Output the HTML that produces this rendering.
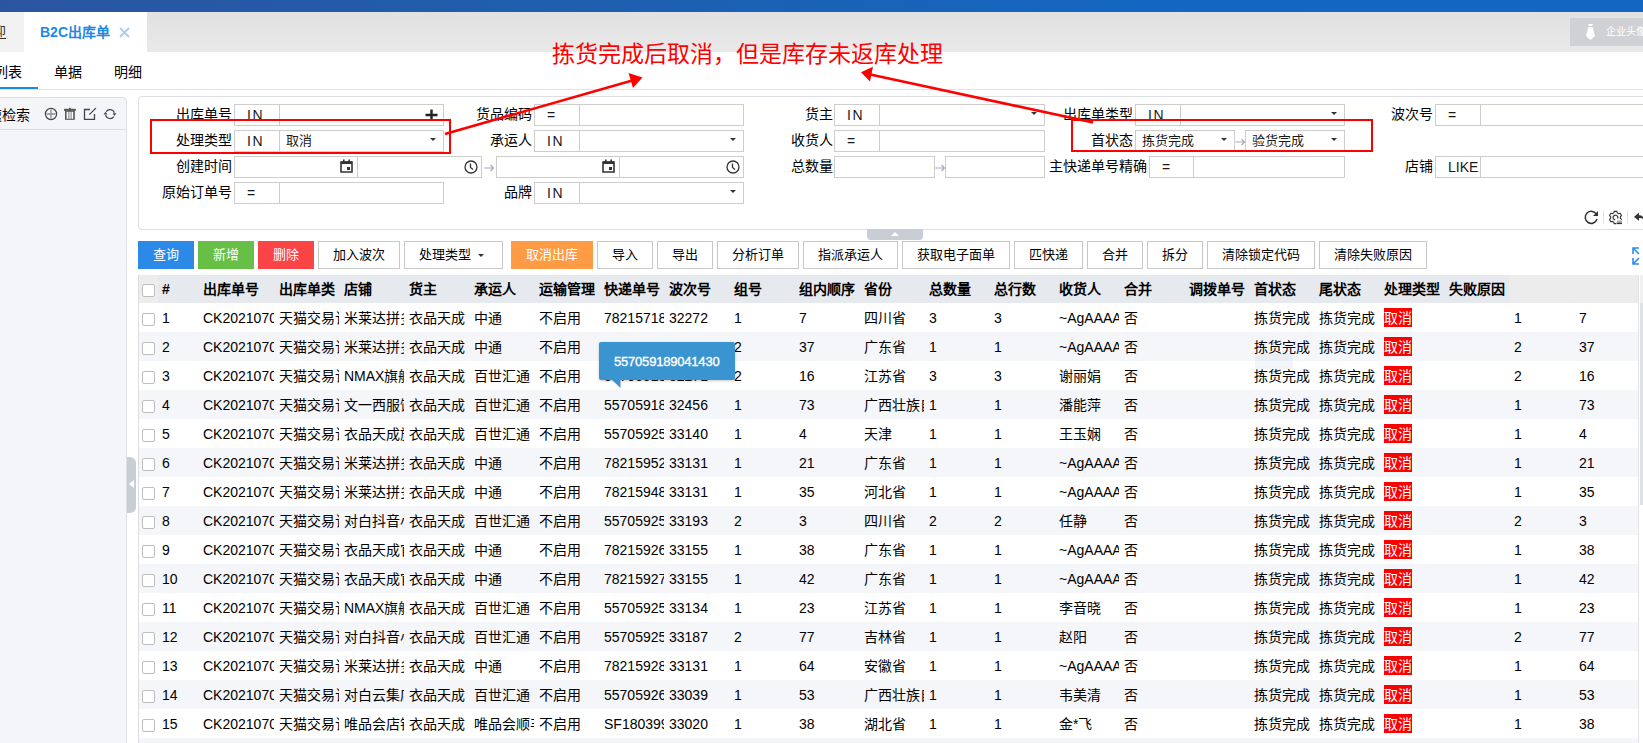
<!DOCTYPE html><html lang="zh-CN"><head><meta charset="utf-8"><style>
*{box-sizing:border-box;margin:0;padding:0}
html,body{width:1643px;height:743px;overflow:hidden;background:#fff}
body{position:relative;font-family:"Liberation Sans",sans-serif;color:#000;font-size:14px}
.abs{position:absolute}
.topbar{left:0;top:0;width:1643px;height:12px;background:linear-gradient(90deg,#2b55a1 0%,#225cab 25%,#1a62b6 50%,#1367c2 73%,#1466c2 100%)}
.tabbar{left:0;top:12px;width:1643px;height:40px;background:linear-gradient(180deg,#e1e1e1,#e9e9e9)}
.tab0{left:0;top:12px;width:24px;height:40px;background:#f2f2f2;overflow:hidden}
.tab1{left:24px;top:12px;width:123px;height:40px;background:#fff}
.lbl{position:absolute;text-align:right;white-space:nowrap;font-size:14px;line-height:22px;color:#000}
.inp{position:absolute;height:22px;border:1px solid #cdcdcd;background:#fff;white-space:nowrap}
.op{position:absolute;left:0;top:0;height:20px;border-right:1px solid #cdcdcd;text-align:left;padding-left:12px;line-height:20px;font-size:14px;color:#1a1a1a}
.val{position:absolute;left:6px;top:0;line-height:20px;font-size:13px;color:#1a1a1a}
.caret{position:absolute;top:7px;width:0;height:0;border-left:3px solid transparent;border-right:3px solid transparent;border-top:3.5px solid #333}
.arr{position:absolute;width:11px;height:8px}
.btn{position:absolute;top:241px;height:28px;border:1px solid #c8c8c8;background:#fff;font-size:13px;line-height:26px;text-align:center;color:#000;white-space:nowrap}
.btn.c{border:none;color:#fff;line-height:28px}
.th,.td{position:absolute;white-space:nowrap;overflow:hidden;padding-left:4px}
.th{font-weight:bold;font-size:14px;line-height:28px;top:0;height:28px}
.row{position:absolute;left:139px;width:1499px;height:29px}
.td{font-size:14px;line-height:29px;top:1px;height:28px;color:#000}
.cb{position:absolute;width:13px;height:13px;border:1px solid #bdbdbd;border-radius:2px;background:#fff}
.qx{background:#f00;color:#fff;display:inline-block;line-height:20px;height:19px;vertical-align:middle;position:relative;top:-2px}
</style></head><body>
<div class="abs topbar"></div>
<div class="abs tabbar"></div>
<div class="abs tab0"><span class="abs" style="left:-22px;top:10px;font-size:14px;line-height:20px;color:#333;text-decoration:underline">欢迎</span></div>
<div class="abs tab1"><span class="abs" style="left:16px;top:10px;font-size:14px;line-height:20px;font-weight:bold;color:#1e88e5">B2C出库单</span><svg class="abs" style="left:95px;top:15px" width="11" height="11" viewBox="0 0 11 11"><path d="M1 1l9 9M10 1l-9 9" stroke="#a6cdf5" stroke-width="1.8"/></svg></div>
<div class="abs" style="left:1570px;top:18px;width:80px;height:28px;background:#d0d1d5"><svg class="abs" style="left:15px;top:6px" width="12" height="16" viewBox="0 0 12 16"><path d="M3 0h5l-1 2h-3z M3.5 3h4l2.5 9-4.5 4-4.5-4z" fill="#fff"/></svg><span class="abs" style="left:36px;top:7px;font-size:10px;line-height:14px;color:#fff">企业头像</span></div>
<span class="abs" style="left:-6px;top:62px;font-size:14px;line-height:20px;color:#000">列表</span>
<span class="abs" style="left:54px;top:62px;font-size:14px;line-height:20px;color:#000">单据</span>
<span class="abs" style="left:114px;top:62px;font-size:14px;line-height:20px;color:#000">明细</span>
<div class="abs" style="left:0;top:87px;width:38px;height:2px;background:#1e88e5"></div>
<div class="abs" style="left:0;top:89px;width:1643px;height:1px;background:#e2e2e2"></div>
<div class="abs" style="left:-10px;top:97px;width:137px;height:700px;background:#f4f5f8;border:1px solid #dcdee3;border-radius:4px"></div>
<div class="abs" style="left:0;top:129px;width:126px;height:1px;background:#dcdee3"></div>
<span class="abs" style="left:-12px;top:105px;font-size:14px;line-height:20px;color:#000">速检索</span>
<svg class="abs" style="left:44px;top:107px" width="74" height="14" viewBox="0 0 74 14">
<circle cx="7" cy="7" r="5.6" fill="none" stroke="#444" stroke-width="1.2"/><path d="M7 2.5v9M2.5 7h9" stroke="#8a8a8a" stroke-width="1.3"/>
<rect x="20" y="1.8" width="11.8" height="2.1" fill="#555"/><rect x="25" y="0.8" width="1.8" height="1.5" fill="#555"/><rect x="21" y="3.8" width="9.8" height="9" fill="#555"/><rect x="22.6" y="4.8" width="1.6" height="7" fill="#fff"/><rect x="27.6" y="4.8" width="1.6" height="7" fill="#fff"/><rect x="24.4" y="4.8" width="3" height="7" fill="#ccc"/>
<path d="M46 2.5H40.5V12.3H50.5V7" fill="none" stroke="#444" stroke-width="1.3"/><path d="M45.3 7.6L51.9 1.1" stroke="#444" stroke-width="1.3"/>
<path d="M62.2 4.6A4.6 4.6 0 0 1 70.4 5.8" fill="none" stroke="#444" stroke-width="1.2"/><path d="M68.6 6.2h3.8l-1.9 2.8z" fill="#444"/>
<path d="M69.8 9.6A4.6 4.6 0 0 1 61.6 8.2" fill="none" stroke="#444" stroke-width="1.2"/><path d="M59.6 7.6h3.8l-1.9-2.8z" fill="#444"/>
</svg>
<div class="abs" style="left:127px;top:457px;width:9px;height:56px;background:#c9cdd6;border-radius:0 6px 6px 0"></div>
<div class="abs" style="left:129px;top:480px;width:0;height:0;border-top:4px solid transparent;border-bottom:4px solid transparent;border-right:5px solid #fff"></div>
<div class="abs" style="left:138px;top:96px;width:1530px;height:134px;border:1px solid #dcdee3;border-radius:4px;background:#fff"></div>
<span class="lbl" style="right:1411px;top:103px">出库单号</span>
<div class="inp" style="left:234px;top:104px;width:210px"><span class="op" style="width:45px;letter-spacing:1.5px">IN</span><svg class="abs" style="left:190px;top:4px" width="13" height="12" viewBox="0 0 13 12"><path d="M6.5 0.5v11M0.5 6h12" stroke="#222" stroke-width="2.4"/></svg></div>
<span class="lbl" style="right:1411px;top:129px">处理类型</span>
<div class="inp" style="left:234px;top:130px;width:210px"><span class="op" style="width:45px;letter-spacing:1.5px">IN</span><span class="val" style="left:51px">取消</span><span class="caret" style="left:195px"></span></div>
<span class="lbl" style="right:1411px;top:155px">创建时间</span>
<span class="lbl" style="right:1411px;top:181px">原始订单号</span>
<div class="inp" style="left:234px;top:182px;width:210px"><span class="op" style="width:45px">=</span></div>
<span class="lbl" style="right:1111px;top:103px">货品编码</span>
<div class="inp" style="left:534px;top:104px;width:210px"><span class="op" style="width:45px">=</span></div>
<span class="lbl" style="right:1111px;top:129px">承运人</span>
<div class="inp" style="left:534px;top:130px;width:210px"><span class="op" style="width:45px;letter-spacing:1.5px">IN</span><span class="caret" style="left:195px"></span></div>
<span class="lbl" style="right:1111px;top:181px">品牌</span>
<div class="inp" style="left:534px;top:182px;width:210px"><span class="op" style="width:45px;letter-spacing:1.5px">IN</span><span class="caret" style="left:195px"></span></div>
<div class="inp" style="left:234px;top:156px;width:248px"><div class="abs" style="left:122px;top:0;width:1px;height:20px;background:#cdcdcd"></div><svg class="abs" style="left:105px;top:2px" width="13" height="14" viewBox="0 0 13 14"><path d="M1 3h11v10h-11z" fill="none" stroke="#333" stroke-width="1.6"/><path d="M1 2.5h11v2.5h-11z" fill="#333"/><rect x="3" y="0.5" width="1.6" height="3" fill="#333"/><rect x="8.4" y="0.5" width="1.6" height="3" fill="#333"/><rect x="7" y="8" width="3" height="3" fill="#333"/></svg><svg class="abs" style="left:229px;top:3px" width="14" height="14" viewBox="0 0 14 14"><circle cx="7" cy="7" r="6" fill="none" stroke="#333" stroke-width="1.3"/><path d="M6.5 3.5v4l2.5 2" fill="none" stroke="#333" stroke-width="1.3"/></svg></div>
<div class="inp" style="left:496px;top:156px;width:248px"><div class="abs" style="left:122px;top:0;width:1px;height:20px;background:#cdcdcd"></div><svg class="abs" style="left:105px;top:2px" width="13" height="14" viewBox="0 0 13 14"><path d="M1 3h11v10h-11z" fill="none" stroke="#333" stroke-width="1.6"/><path d="M1 2.5h11v2.5h-11z" fill="#333"/><rect x="3" y="0.5" width="1.6" height="3" fill="#333"/><rect x="8.4" y="0.5" width="1.6" height="3" fill="#333"/><rect x="7" y="8" width="3" height="3" fill="#333"/></svg><svg class="abs" style="left:229px;top:3px" width="14" height="14" viewBox="0 0 14 14"><circle cx="7" cy="7" r="6" fill="none" stroke="#333" stroke-width="1.3"/><path d="M6.5 3.5v4l2.5 2" fill="none" stroke="#333" stroke-width="1.3"/></svg></div>
<svg class="arr" style="left:484px;top:164px" width="11" height="8" viewBox="0 0 11 8"><path d="M0.5 4h9M6.5 1l3 3-3 3" fill="none" stroke="#a3abba" stroke-width="1.2"/></svg>
<span class="lbl" style="right:810px;top:103px">货主</span>
<div class="inp" style="left:834px;top:104px;width:211px"><span class="op" style="width:45px;letter-spacing:1.5px">IN</span><span class="caret" style="left:196px"></span></div>
<span class="lbl" style="right:810px;top:129px">收货人</span>
<div class="inp" style="left:834px;top:130px;width:211px"><span class="op" style="width:45px">=</span></div>
<span class="lbl" style="right:810px;top:155px">总数量</span>
<div class="inp" style="left:834px;top:156px;width:101px"></div>
<svg class="arr" style="left:935px;top:164px" width="11" height="8" viewBox="0 0 11 8"><path d="M0.5 4h9M6.5 1l3 3-3 3" fill="none" stroke="#a3abba" stroke-width="1.2"/></svg>
<div class="inp" style="left:945px;top:156px;width:100px"></div>
<span class="lbl" style="right:510px;top:103px">出库单类型</span>
<div class="inp" style="left:1135px;top:104px;width:210px"><span class="op" style="width:45px;letter-spacing:1.5px">IN</span><span class="caret" style="left:195px"></span></div>
<span class="lbl" style="right:510px;top:129px">首状态</span>
<div class="inp" style="left:1135px;top:130px;width:100px"><span class="val" style="left:6px">拣货完成</span><span class="caret" style="left:85px"></span></div>
<svg class="arr" style="left:1235px;top:138px" width="11" height="8" viewBox="0 0 11 8"><path d="M0.5 4h9M6.5 1l3 3-3 3" fill="none" stroke="#a3abba" stroke-width="1.2"/></svg>
<div class="inp" style="left:1245px;top:130px;width:100px"><span class="val" style="left:6px">验货完成</span><span class="caret" style="left:85px"></span></div>
<span class="lbl" style="right:496px;top:155px">主快递单号精确</span>
<div class="inp" style="left:1149px;top:156px;width:196px"><span class="op" style="width:44px">=</span></div>
<span class="lbl" style="right:210px;top:103px">波次号</span>
<div class="inp" style="left:1435px;top:104px;width:260px"><span class="op" style="width:45px">=</span></div>
<span class="lbl" style="right:210px;top:155px">店铺</span>
<div class="inp" style="left:1435px;top:156px;width:260px"><span class="op" style="width:45px">LIKE</span></div>
<svg class="abs" style="left:1584px;top:210px" width="59" height="15" viewBox="0 0 59 15">
<path d="M12.5 4.5A6 6 0 1 0 13 9" fill="none" stroke="#333" stroke-width="1.5"/><path d="M14 1v5h-5z" fill="#333"/>
<rect x="19" y="1" width="1" height="13" fill="#dcdfe5"/>
<g transform="translate(25,1)"><path d="M4.66 1.96 L5.19 0.34 L7.81 0.34 L8.34 1.96 L9.52 2.64 L11.18 2.28 L12.49 4.55 L11.35 5.82 L11.35 7.18 L12.49 8.45 L11.18 10.72 L9.52 10.36 L8.34 11.04 L7.81 12.66 L5.19 12.66 L4.66 11.04 L3.48 10.36 L1.82 10.72 L0.51 8.45 L1.65 7.18 L1.65 5.82 L0.51 4.55 L1.82 2.28 L3.48 2.64Z" fill="none" stroke="#333" stroke-width="1.1"/><path d="M8.6 7.6A2.4 2.4 0 1 0 6.2 8.9" fill="none" stroke="#333" stroke-width="1.2"/><rect x="7.5" y="8.8" width="6.5" height="5" fill="#fff"/><rect x="8" y="9.5" width="5" height="2" fill="#aaa"/><rect x="8" y="11.6" width="5" height="1.5" fill="#333"/></g>
<rect x="43" y="1" width="1" height="13" fill="#dcdfe5"/>
<path d="M50 7l5-4.5v2.8c3 0 5 1.5 5 5-1-1.8-2.5-2.3-5-2.3v2.8z" fill="#333"/>
</svg>
<div class="abs" style="left:867px;top:229px;width:56px;height:11px;background:#c9cdd6;border-radius:0 0 4px 4px"></div>
<div class="abs" style="left:890.5px;top:231.5px;width:0;height:0;border-left:4px solid transparent;border-right:4px solid transparent;border-bottom:4.5px solid #fff"></div>
<div class="btn c" style="left:138px;width:56px;background:#2b89e8">查询</div>
<div class="btn c" style="left:198px;width:56px;background:#67bf45">新增</div>
<div class="btn c" style="left:258px;width:56px;background:#fb4445">删除</div>
<div class="btn" style="left:318px;width:82px">加入波次</div>
<div class="btn" style="left:404px;width:99px"><span class="abs" style="left:14px;top:0">处理类型</span><span class="caret" style="left:73px;top:12px;border-left-width:3px;border-right-width:3px;border-top-width:3px"></span></div>
<div class="btn c" style="left:511px;width:82px;background:#ff9b45">取消出库</div>
<div class="btn" style="left:597px;width:56px">导入</div>
<div class="btn" style="left:657px;width:56px">导出</div>
<div class="btn" style="left:717px;width:82px">分析订单</div>
<div class="btn" style="left:803px;width:95px">指派承运人</div>
<div class="btn" style="left:902px;width:108px">获取电子面单</div>
<div class="btn" style="left:1014px;width:69px">匹快递</div>
<div class="btn" style="left:1087px;width:56px">合并</div>
<div class="btn" style="left:1147px;width:56px">拆分</div>
<div class="btn" style="left:1207px;width:108px">清除锁定代码</div>
<div class="btn" style="left:1319px;width:108px">清除失败原因</div>
<svg class="abs" style="left:1631px;top:246px" width="10" height="20" viewBox="0 0 10 20"><g fill="none" stroke="#2d8cf0" stroke-width="1.6"><path d="M2 8V2h6M2 2l6 6"/><path d="M2 12v6h6M2 18l6-6"/></g></svg>
<div class="abs" style="left:138px;top:275px;width:1px;height:470px;background:#dddddd"></div>
<div class="abs" style="left:139px;top:275px;width:1370px;height:28px;background:#e6e9ee"></div>
<div class="abs" style="left:139px;top:275px;width:19px;height:28px;background:#ededed"></div>
<div class="abs" style="left:1509px;top:275px;width:130px;height:28px;background:#ececec"></div>
<div class="abs" style="left:1638px;top:275px;width:1px;height:470px;background:#e3e3e3"></div>
<div class="abs" style="left:1640px;top:275px;width:3px;height:28px;background:#f0f0f0"></div>
<div class="abs" style="left:1640px;top:303px;width:3px;height:202px;background:#dde1e8"></div>
<div class="abs cb" style="left:142px;top:284px"></div>
<div class="abs" style="left:0;top:275px;width:1643px;height:28px">
<span class="th" style="left:158px;width:36px">#</span>
<span class="th" style="left:199px;width:71px">出库单号</span>
<span class="th" style="left:275px;width:60px">出库单类型</span>
<span class="th" style="left:340px;width:60px">店铺</span>
<span class="th" style="left:405px;width:60px">货主</span>
<span class="th" style="left:470px;width:60px">承运人</span>
<span class="th" style="left:535px;width:60px">运输管理</span>
<span class="th" style="left:600px;width:60px">快递单号</span>
<span class="th" style="left:665px;width:60px">波次号</span>
<span class="th" style="left:730px;width:60px">组号</span>
<span class="th" style="left:795px;width:60px">组内顺序</span>
<span class="th" style="left:860px;width:60px">省份</span>
<span class="th" style="left:925px;width:60px">总数量</span>
<span class="th" style="left:990px;width:60px">总行数</span>
<span class="th" style="left:1055px;width:60px">收货人</span>
<span class="th" style="left:1120px;width:60px">合并</span>
<span class="th" style="left:1185px;width:60px">调拨单号</span>
<span class="th" style="left:1250px;width:60px">首状态</span>
<span class="th" style="left:1315px;width:60px">尾状态</span>
<span class="th" style="left:1380px;width:60px">处理类型</span>
<span class="th" style="left:1445px;width:60px">失败原因</span>
</div>
<div class="abs" style="left:139px;top:303px;width:1499px;height:29px;background:#fff"></div>
<div class="abs cb" style="left:142px;top:313px"></div>
<div class="abs" style="left:0;top:303px;width:1643px;height:29px">
<span class="td" style="left:158px;width:40px">1</span>
<span class="td" style="left:199px;width:75px">CK2021070812345</span>
<span class="td" style="left:275px;width:64px">天猫交易订单</span>
<span class="td" style="left:340px;width:64px">米莱达拼多多</span>
<span class="td" style="left:405px;width:64px">衣品天成</span>
<span class="td" style="left:470px;width:64px">中通</span>
<span class="td" style="left:535px;width:64px">不启用</span>
<span class="td" style="left:600px;width:64px">7821571812345</span>
<span class="td" style="left:665px;width:64px">32272</span>
<span class="td" style="left:730px;width:64px">1</span>
<span class="td" style="left:795px;width:64px">7</span>
<span class="td" style="left:860px;width:64px">四川省</span>
<span class="td" style="left:925px;width:64px">3</span>
<span class="td" style="left:990px;width:64px">3</span>
<span class="td" style="left:1055px;width:64px">~AgAAAA</span>
<span class="td" style="left:1120px;width:64px">否</span>
<span class="td" style="left:1250px;width:64px">拣货完成</span>
<span class="td" style="left:1315px;width:64px">拣货完成</span>
<span class="td" style="left:1380px;width:64px"><span class="qx">取消</span></span>
<span class="td" style="left:1510px;width:64px">1</span>
<span class="td" style="left:1575px;width:64px">7</span>
</div>
<div class="abs" style="left:139px;top:332px;width:1499px;height:29px;background:#f5f6f9"></div>
<div class="abs cb" style="left:142px;top:342px"></div>
<div class="abs" style="left:0;top:332px;width:1643px;height:29px">
<span class="td" style="left:158px;width:40px">2</span>
<span class="td" style="left:199px;width:75px">CK2021070812345</span>
<span class="td" style="left:275px;width:64px">天猫交易订单</span>
<span class="td" style="left:340px;width:64px">米莱达拼多多</span>
<span class="td" style="left:405px;width:64px">衣品天成</span>
<span class="td" style="left:470px;width:64px">中通</span>
<span class="td" style="left:535px;width:64px">不启用</span>
<span class="td" style="left:600px;width:64px">7821571812345</span>
<span class="td" style="left:665px;width:64px">33071</span>
<span class="td" style="left:730px;width:64px">2</span>
<span class="td" style="left:795px;width:64px">37</span>
<span class="td" style="left:860px;width:64px">广东省</span>
<span class="td" style="left:925px;width:64px">1</span>
<span class="td" style="left:990px;width:64px">1</span>
<span class="td" style="left:1055px;width:64px">~AgAAAA</span>
<span class="td" style="left:1120px;width:64px">否</span>
<span class="td" style="left:1250px;width:64px">拣货完成</span>
<span class="td" style="left:1315px;width:64px">拣货完成</span>
<span class="td" style="left:1380px;width:64px"><span class="qx">取消</span></span>
<span class="td" style="left:1510px;width:64px">2</span>
<span class="td" style="left:1575px;width:64px">37</span>
</div>
<div class="abs" style="left:139px;top:361px;width:1499px;height:29px;background:#fff"></div>
<div class="abs cb" style="left:142px;top:371px"></div>
<div class="abs" style="left:0;top:361px;width:1643px;height:29px">
<span class="td" style="left:158px;width:40px">3</span>
<span class="td" style="left:199px;width:75px">CK2021070812345</span>
<span class="td" style="left:275px;width:64px">天猫交易订单</span>
<span class="td" style="left:340px;width:64px">NMAX旗舰店</span>
<span class="td" style="left:405px;width:64px">衣品天成</span>
<span class="td" style="left:470px;width:64px">百世汇通</span>
<span class="td" style="left:535px;width:64px">不启用</span>
<span class="td" style="left:600px;width:64px">557059189041430</span>
<span class="td" style="left:665px;width:64px">32271</span>
<span class="td" style="left:730px;width:64px">2</span>
<span class="td" style="left:795px;width:64px">16</span>
<span class="td" style="left:860px;width:64px">江苏省</span>
<span class="td" style="left:925px;width:64px">3</span>
<span class="td" style="left:990px;width:64px">3</span>
<span class="td" style="left:1055px;width:64px">谢丽娟</span>
<span class="td" style="left:1120px;width:64px">否</span>
<span class="td" style="left:1250px;width:64px">拣货完成</span>
<span class="td" style="left:1315px;width:64px">拣货完成</span>
<span class="td" style="left:1380px;width:64px"><span class="qx">取消</span></span>
<span class="td" style="left:1510px;width:64px">2</span>
<span class="td" style="left:1575px;width:64px">16</span>
</div>
<div class="abs" style="left:139px;top:390px;width:1499px;height:29px;background:#f5f6f9"></div>
<div class="abs cb" style="left:142px;top:400px"></div>
<div class="abs" style="left:0;top:390px;width:1643px;height:29px">
<span class="td" style="left:158px;width:40px">4</span>
<span class="td" style="left:199px;width:75px">CK2021070812345</span>
<span class="td" style="left:275px;width:64px">天猫交易订单</span>
<span class="td" style="left:340px;width:64px">文一西服饰</span>
<span class="td" style="left:405px;width:64px">衣品天成</span>
<span class="td" style="left:470px;width:64px">百世汇通</span>
<span class="td" style="left:535px;width:64px">不启用</span>
<span class="td" style="left:600px;width:64px">557059181234</span>
<span class="td" style="left:665px;width:64px">32456</span>
<span class="td" style="left:730px;width:64px">1</span>
<span class="td" style="left:795px;width:64px">73</span>
<span class="td" style="left:860px;width:64px">广西壮族自治区</span>
<span class="td" style="left:925px;width:64px">1</span>
<span class="td" style="left:990px;width:64px">1</span>
<span class="td" style="left:1055px;width:64px">潘能萍</span>
<span class="td" style="left:1120px;width:64px">否</span>
<span class="td" style="left:1250px;width:64px">拣货完成</span>
<span class="td" style="left:1315px;width:64px">拣货完成</span>
<span class="td" style="left:1380px;width:64px"><span class="qx">取消</span></span>
<span class="td" style="left:1510px;width:64px">1</span>
<span class="td" style="left:1575px;width:64px">73</span>
</div>
<div class="abs" style="left:139px;top:419px;width:1499px;height:29px;background:#fff"></div>
<div class="abs cb" style="left:142px;top:429px"></div>
<div class="abs" style="left:0;top:419px;width:1643px;height:29px">
<span class="td" style="left:158px;width:40px">5</span>
<span class="td" style="left:199px;width:75px">CK2021070812345</span>
<span class="td" style="left:275px;width:64px">天猫交易订单</span>
<span class="td" style="left:340px;width:64px">衣品天成旗舰</span>
<span class="td" style="left:405px;width:64px">衣品天成</span>
<span class="td" style="left:470px;width:64px">百世汇通</span>
<span class="td" style="left:535px;width:64px">不启用</span>
<span class="td" style="left:600px;width:64px">557059251234</span>
<span class="td" style="left:665px;width:64px">33140</span>
<span class="td" style="left:730px;width:64px">1</span>
<span class="td" style="left:795px;width:64px">4</span>
<span class="td" style="left:860px;width:64px">天津</span>
<span class="td" style="left:925px;width:64px">1</span>
<span class="td" style="left:990px;width:64px">1</span>
<span class="td" style="left:1055px;width:64px">王玉娴</span>
<span class="td" style="left:1120px;width:64px">否</span>
<span class="td" style="left:1250px;width:64px">拣货完成</span>
<span class="td" style="left:1315px;width:64px">拣货完成</span>
<span class="td" style="left:1380px;width:64px"><span class="qx">取消</span></span>
<span class="td" style="left:1510px;width:64px">1</span>
<span class="td" style="left:1575px;width:64px">4</span>
</div>
<div class="abs" style="left:139px;top:448px;width:1499px;height:29px;background:#f5f6f9"></div>
<div class="abs cb" style="left:142px;top:458px"></div>
<div class="abs" style="left:0;top:448px;width:1643px;height:29px">
<span class="td" style="left:158px;width:40px">6</span>
<span class="td" style="left:199px;width:75px">CK2021070812345</span>
<span class="td" style="left:275px;width:64px">天猫交易订单</span>
<span class="td" style="left:340px;width:64px">米莱达拼多多</span>
<span class="td" style="left:405px;width:64px">衣品天成</span>
<span class="td" style="left:470px;width:64px">中通</span>
<span class="td" style="left:535px;width:64px">不启用</span>
<span class="td" style="left:600px;width:64px">7821595212345</span>
<span class="td" style="left:665px;width:64px">33131</span>
<span class="td" style="left:730px;width:64px">1</span>
<span class="td" style="left:795px;width:64px">21</span>
<span class="td" style="left:860px;width:64px">广东省</span>
<span class="td" style="left:925px;width:64px">1</span>
<span class="td" style="left:990px;width:64px">1</span>
<span class="td" style="left:1055px;width:64px">~AgAAAA</span>
<span class="td" style="left:1120px;width:64px">否</span>
<span class="td" style="left:1250px;width:64px">拣货完成</span>
<span class="td" style="left:1315px;width:64px">拣货完成</span>
<span class="td" style="left:1380px;width:64px"><span class="qx">取消</span></span>
<span class="td" style="left:1510px;width:64px">1</span>
<span class="td" style="left:1575px;width:64px">21</span>
</div>
<div class="abs" style="left:139px;top:477px;width:1499px;height:29px;background:#fff"></div>
<div class="abs cb" style="left:142px;top:487px"></div>
<div class="abs" style="left:0;top:477px;width:1643px;height:29px">
<span class="td" style="left:158px;width:40px">7</span>
<span class="td" style="left:199px;width:75px">CK2021070812345</span>
<span class="td" style="left:275px;width:64px">天猫交易订单</span>
<span class="td" style="left:340px;width:64px">米莱达拼多多</span>
<span class="td" style="left:405px;width:64px">衣品天成</span>
<span class="td" style="left:470px;width:64px">中通</span>
<span class="td" style="left:535px;width:64px">不启用</span>
<span class="td" style="left:600px;width:64px">7821594812345</span>
<span class="td" style="left:665px;width:64px">33131</span>
<span class="td" style="left:730px;width:64px">1</span>
<span class="td" style="left:795px;width:64px">35</span>
<span class="td" style="left:860px;width:64px">河北省</span>
<span class="td" style="left:925px;width:64px">1</span>
<span class="td" style="left:990px;width:64px">1</span>
<span class="td" style="left:1055px;width:64px">~AgAAAA</span>
<span class="td" style="left:1120px;width:64px">否</span>
<span class="td" style="left:1250px;width:64px">拣货完成</span>
<span class="td" style="left:1315px;width:64px">拣货完成</span>
<span class="td" style="left:1380px;width:64px"><span class="qx">取消</span></span>
<span class="td" style="left:1510px;width:64px">1</span>
<span class="td" style="left:1575px;width:64px">35</span>
</div>
<div class="abs" style="left:139px;top:506px;width:1499px;height:29px;background:#f5f6f9"></div>
<div class="abs cb" style="left:142px;top:516px"></div>
<div class="abs" style="left:0;top:506px;width:1643px;height:29px">
<span class="td" style="left:158px;width:40px">8</span>
<span class="td" style="left:199px;width:75px">CK2021070812345</span>
<span class="td" style="left:275px;width:64px">天猫交易订单</span>
<span class="td" style="left:340px;width:64px">对白抖音小店</span>
<span class="td" style="left:405px;width:64px">衣品天成</span>
<span class="td" style="left:470px;width:64px">百世汇通</span>
<span class="td" style="left:535px;width:64px">不启用</span>
<span class="td" style="left:600px;width:64px">557059251234</span>
<span class="td" style="left:665px;width:64px">33193</span>
<span class="td" style="left:730px;width:64px">2</span>
<span class="td" style="left:795px;width:64px">3</span>
<span class="td" style="left:860px;width:64px">四川省</span>
<span class="td" style="left:925px;width:64px">2</span>
<span class="td" style="left:990px;width:64px">2</span>
<span class="td" style="left:1055px;width:64px">任静</span>
<span class="td" style="left:1120px;width:64px">否</span>
<span class="td" style="left:1250px;width:64px">拣货完成</span>
<span class="td" style="left:1315px;width:64px">拣货完成</span>
<span class="td" style="left:1380px;width:64px"><span class="qx">取消</span></span>
<span class="td" style="left:1510px;width:64px">2</span>
<span class="td" style="left:1575px;width:64px">3</span>
</div>
<div class="abs" style="left:139px;top:535px;width:1499px;height:29px;background:#fff"></div>
<div class="abs cb" style="left:142px;top:545px"></div>
<div class="abs" style="left:0;top:535px;width:1643px;height:29px">
<span class="td" style="left:158px;width:40px">9</span>
<span class="td" style="left:199px;width:75px">CK2021070812345</span>
<span class="td" style="left:275px;width:64px">天猫交易订单</span>
<span class="td" style="left:340px;width:64px">衣品天成官方</span>
<span class="td" style="left:405px;width:64px">衣品天成</span>
<span class="td" style="left:470px;width:64px">中通</span>
<span class="td" style="left:535px;width:64px">不启用</span>
<span class="td" style="left:600px;width:64px">7821592612345</span>
<span class="td" style="left:665px;width:64px">33155</span>
<span class="td" style="left:730px;width:64px">1</span>
<span class="td" style="left:795px;width:64px">38</span>
<span class="td" style="left:860px;width:64px">广东省</span>
<span class="td" style="left:925px;width:64px">1</span>
<span class="td" style="left:990px;width:64px">1</span>
<span class="td" style="left:1055px;width:64px">~AgAAAA</span>
<span class="td" style="left:1120px;width:64px">否</span>
<span class="td" style="left:1250px;width:64px">拣货完成</span>
<span class="td" style="left:1315px;width:64px">拣货完成</span>
<span class="td" style="left:1380px;width:64px"><span class="qx">取消</span></span>
<span class="td" style="left:1510px;width:64px">1</span>
<span class="td" style="left:1575px;width:64px">38</span>
</div>
<div class="abs" style="left:139px;top:564px;width:1499px;height:29px;background:#f5f6f9"></div>
<div class="abs cb" style="left:142px;top:574px"></div>
<div class="abs" style="left:0;top:564px;width:1643px;height:29px">
<span class="td" style="left:158px;width:40px">10</span>
<span class="td" style="left:199px;width:75px">CK2021070812345</span>
<span class="td" style="left:275px;width:64px">天猫交易订单</span>
<span class="td" style="left:340px;width:64px">衣品天成官方</span>
<span class="td" style="left:405px;width:64px">衣品天成</span>
<span class="td" style="left:470px;width:64px">中通</span>
<span class="td" style="left:535px;width:64px">不启用</span>
<span class="td" style="left:600px;width:64px">7821592712345</span>
<span class="td" style="left:665px;width:64px">33155</span>
<span class="td" style="left:730px;width:64px">1</span>
<span class="td" style="left:795px;width:64px">42</span>
<span class="td" style="left:860px;width:64px">广东省</span>
<span class="td" style="left:925px;width:64px">1</span>
<span class="td" style="left:990px;width:64px">1</span>
<span class="td" style="left:1055px;width:64px">~AgAAAA</span>
<span class="td" style="left:1120px;width:64px">否</span>
<span class="td" style="left:1250px;width:64px">拣货完成</span>
<span class="td" style="left:1315px;width:64px">拣货完成</span>
<span class="td" style="left:1380px;width:64px"><span class="qx">取消</span></span>
<span class="td" style="left:1510px;width:64px">1</span>
<span class="td" style="left:1575px;width:64px">42</span>
</div>
<div class="abs" style="left:139px;top:593px;width:1499px;height:29px;background:#fff"></div>
<div class="abs cb" style="left:142px;top:603px"></div>
<div class="abs" style="left:0;top:593px;width:1643px;height:29px">
<span class="td" style="left:158px;width:40px">11</span>
<span class="td" style="left:199px;width:75px">CK2021070812345</span>
<span class="td" style="left:275px;width:64px">天猫交易订单</span>
<span class="td" style="left:340px;width:64px">NMAX旗舰店</span>
<span class="td" style="left:405px;width:64px">衣品天成</span>
<span class="td" style="left:470px;width:64px">百世汇通</span>
<span class="td" style="left:535px;width:64px">不启用</span>
<span class="td" style="left:600px;width:64px">557059251234</span>
<span class="td" style="left:665px;width:64px">33134</span>
<span class="td" style="left:730px;width:64px">1</span>
<span class="td" style="left:795px;width:64px">23</span>
<span class="td" style="left:860px;width:64px">江苏省</span>
<span class="td" style="left:925px;width:64px">1</span>
<span class="td" style="left:990px;width:64px">1</span>
<span class="td" style="left:1055px;width:64px">李音晓</span>
<span class="td" style="left:1120px;width:64px">否</span>
<span class="td" style="left:1250px;width:64px">拣货完成</span>
<span class="td" style="left:1315px;width:64px">拣货完成</span>
<span class="td" style="left:1380px;width:64px"><span class="qx">取消</span></span>
<span class="td" style="left:1510px;width:64px">1</span>
<span class="td" style="left:1575px;width:64px">23</span>
</div>
<div class="abs" style="left:139px;top:622px;width:1499px;height:29px;background:#f5f6f9"></div>
<div class="abs cb" style="left:142px;top:632px"></div>
<div class="abs" style="left:0;top:622px;width:1643px;height:29px">
<span class="td" style="left:158px;width:40px">12</span>
<span class="td" style="left:199px;width:75px">CK2021070812345</span>
<span class="td" style="left:275px;width:64px">天猫交易订单</span>
<span class="td" style="left:340px;width:64px">对白抖音小店</span>
<span class="td" style="left:405px;width:64px">衣品天成</span>
<span class="td" style="left:470px;width:64px">百世汇通</span>
<span class="td" style="left:535px;width:64px">不启用</span>
<span class="td" style="left:600px;width:64px">557059251234</span>
<span class="td" style="left:665px;width:64px">33187</span>
<span class="td" style="left:730px;width:64px">2</span>
<span class="td" style="left:795px;width:64px">77</span>
<span class="td" style="left:860px;width:64px">吉林省</span>
<span class="td" style="left:925px;width:64px">1</span>
<span class="td" style="left:990px;width:64px">1</span>
<span class="td" style="left:1055px;width:64px">赵阳</span>
<span class="td" style="left:1120px;width:64px">否</span>
<span class="td" style="left:1250px;width:64px">拣货完成</span>
<span class="td" style="left:1315px;width:64px">拣货完成</span>
<span class="td" style="left:1380px;width:64px"><span class="qx">取消</span></span>
<span class="td" style="left:1510px;width:64px">2</span>
<span class="td" style="left:1575px;width:64px">77</span>
</div>
<div class="abs" style="left:139px;top:651px;width:1499px;height:29px;background:#fff"></div>
<div class="abs cb" style="left:142px;top:661px"></div>
<div class="abs" style="left:0;top:651px;width:1643px;height:29px">
<span class="td" style="left:158px;width:40px">13</span>
<span class="td" style="left:199px;width:75px">CK2021070812345</span>
<span class="td" style="left:275px;width:64px">天猫交易订单</span>
<span class="td" style="left:340px;width:64px">米莱达拼多多</span>
<span class="td" style="left:405px;width:64px">衣品天成</span>
<span class="td" style="left:470px;width:64px">中通</span>
<span class="td" style="left:535px;width:64px">不启用</span>
<span class="td" style="left:600px;width:64px">7821592812345</span>
<span class="td" style="left:665px;width:64px">33131</span>
<span class="td" style="left:730px;width:64px">1</span>
<span class="td" style="left:795px;width:64px">64</span>
<span class="td" style="left:860px;width:64px">安徽省</span>
<span class="td" style="left:925px;width:64px">1</span>
<span class="td" style="left:990px;width:64px">1</span>
<span class="td" style="left:1055px;width:64px">~AgAAAA</span>
<span class="td" style="left:1120px;width:64px">否</span>
<span class="td" style="left:1250px;width:64px">拣货完成</span>
<span class="td" style="left:1315px;width:64px">拣货完成</span>
<span class="td" style="left:1380px;width:64px"><span class="qx">取消</span></span>
<span class="td" style="left:1510px;width:64px">1</span>
<span class="td" style="left:1575px;width:64px">64</span>
</div>
<div class="abs" style="left:139px;top:680px;width:1499px;height:29px;background:#f5f6f9"></div>
<div class="abs cb" style="left:142px;top:690px"></div>
<div class="abs" style="left:0;top:680px;width:1643px;height:29px">
<span class="td" style="left:158px;width:40px">14</span>
<span class="td" style="left:199px;width:75px">CK2021070812345</span>
<span class="td" style="left:275px;width:64px">天猫交易订单</span>
<span class="td" style="left:340px;width:64px">对白云集店</span>
<span class="td" style="left:405px;width:64px">衣品天成</span>
<span class="td" style="left:470px;width:64px">百世汇通</span>
<span class="td" style="left:535px;width:64px">不启用</span>
<span class="td" style="left:600px;width:64px">557059261234</span>
<span class="td" style="left:665px;width:64px">33039</span>
<span class="td" style="left:730px;width:64px">1</span>
<span class="td" style="left:795px;width:64px">53</span>
<span class="td" style="left:860px;width:64px">广西壮族自治区</span>
<span class="td" style="left:925px;width:64px">1</span>
<span class="td" style="left:990px;width:64px">1</span>
<span class="td" style="left:1055px;width:64px">韦美清</span>
<span class="td" style="left:1120px;width:64px">否</span>
<span class="td" style="left:1250px;width:64px">拣货完成</span>
<span class="td" style="left:1315px;width:64px">拣货完成</span>
<span class="td" style="left:1380px;width:64px"><span class="qx">取消</span></span>
<span class="td" style="left:1510px;width:64px">1</span>
<span class="td" style="left:1575px;width:64px">53</span>
</div>
<div class="abs" style="left:139px;top:709px;width:1499px;height:29px;background:#fff"></div>
<div class="abs cb" style="left:142px;top:719px"></div>
<div class="abs" style="left:0;top:709px;width:1643px;height:29px">
<span class="td" style="left:158px;width:40px">15</span>
<span class="td" style="left:199px;width:75px">CK2021070812345</span>
<span class="td" style="left:275px;width:64px">天猫交易订单</span>
<span class="td" style="left:340px;width:64px">唯品会店铺</span>
<span class="td" style="left:405px;width:64px">衣品天成</span>
<span class="td" style="left:470px;width:64px">唯品会顺丰</span>
<span class="td" style="left:535px;width:64px">不启用</span>
<span class="td" style="left:600px;width:64px">SF1803991234</span>
<span class="td" style="left:665px;width:64px">33020</span>
<span class="td" style="left:730px;width:64px">1</span>
<span class="td" style="left:795px;width:64px">38</span>
<span class="td" style="left:860px;width:64px">湖北省</span>
<span class="td" style="left:925px;width:64px">1</span>
<span class="td" style="left:990px;width:64px">1</span>
<span class="td" style="left:1055px;width:64px">金*飞</span>
<span class="td" style="left:1120px;width:64px">否</span>
<span class="td" style="left:1250px;width:64px">拣货完成</span>
<span class="td" style="left:1315px;width:64px">拣货完成</span>
<span class="td" style="left:1380px;width:64px"><span class="qx">取消</span></span>
<span class="td" style="left:1510px;width:64px">1</span>
<span class="td" style="left:1575px;width:64px">38</span>
</div>
<div class="abs" style="left:139px;top:738px;width:1499px;height:10px;background:#f5f6f9"></div>
<div class="abs" style="left:599px;top:342px;width:136px;height:38px;background:#3a94cf;border-radius:2px;box-shadow:0 1px 3px rgba(0,0,0,.2)"></div>
<svg class="abs" style="left:610px;top:379px" width="11" height="10" viewBox="0 0 11 10"><path d="M1 0h9.5v9z" fill="#3a94cf"/></svg>
<span class="abs" style="left:614px;top:352px;font-size:13px;line-height:20px;color:#fff;letter-spacing:-0.2px;-webkit-text-stroke:0.35px #fff">557059189041430</span>
<div class="abs" style="left:1255px;top:354px;width:38px;height:15px;background:rgba(200,215,230,.25)"></div>
<div class="abs" style="left:552px;top:42px;font-family:'Liberation Serif',serif;font-weight:200;font-size:23px;line-height:26px;color:#f00;white-space:nowrap">拣货完成后取消，但是库存未返库处理</div>
<div class="abs" style="left:150px;top:119px;width:301px;height:35px;border:2px solid #f00"></div>
<div class="abs" style="left:1071px;top:119px;width:302px;height:33px;border:2px solid #f00"></div>
<svg class="abs" style="left:0;top:0" width="1643" height="743" viewBox="0 0 1643 743">
<path d="M445 134L634 80" stroke="#f00" stroke-width="2.6"/><path d="M642.5 77.5L628.5 73L633 88z" fill="#f00"/>
<path d="M1093 122.5L868 74" stroke="#f00" stroke-width="2.6"/><path d="M861 72.3L873 66.8L870 81.5z" fill="#f00"/>
</svg>
</body></html>
